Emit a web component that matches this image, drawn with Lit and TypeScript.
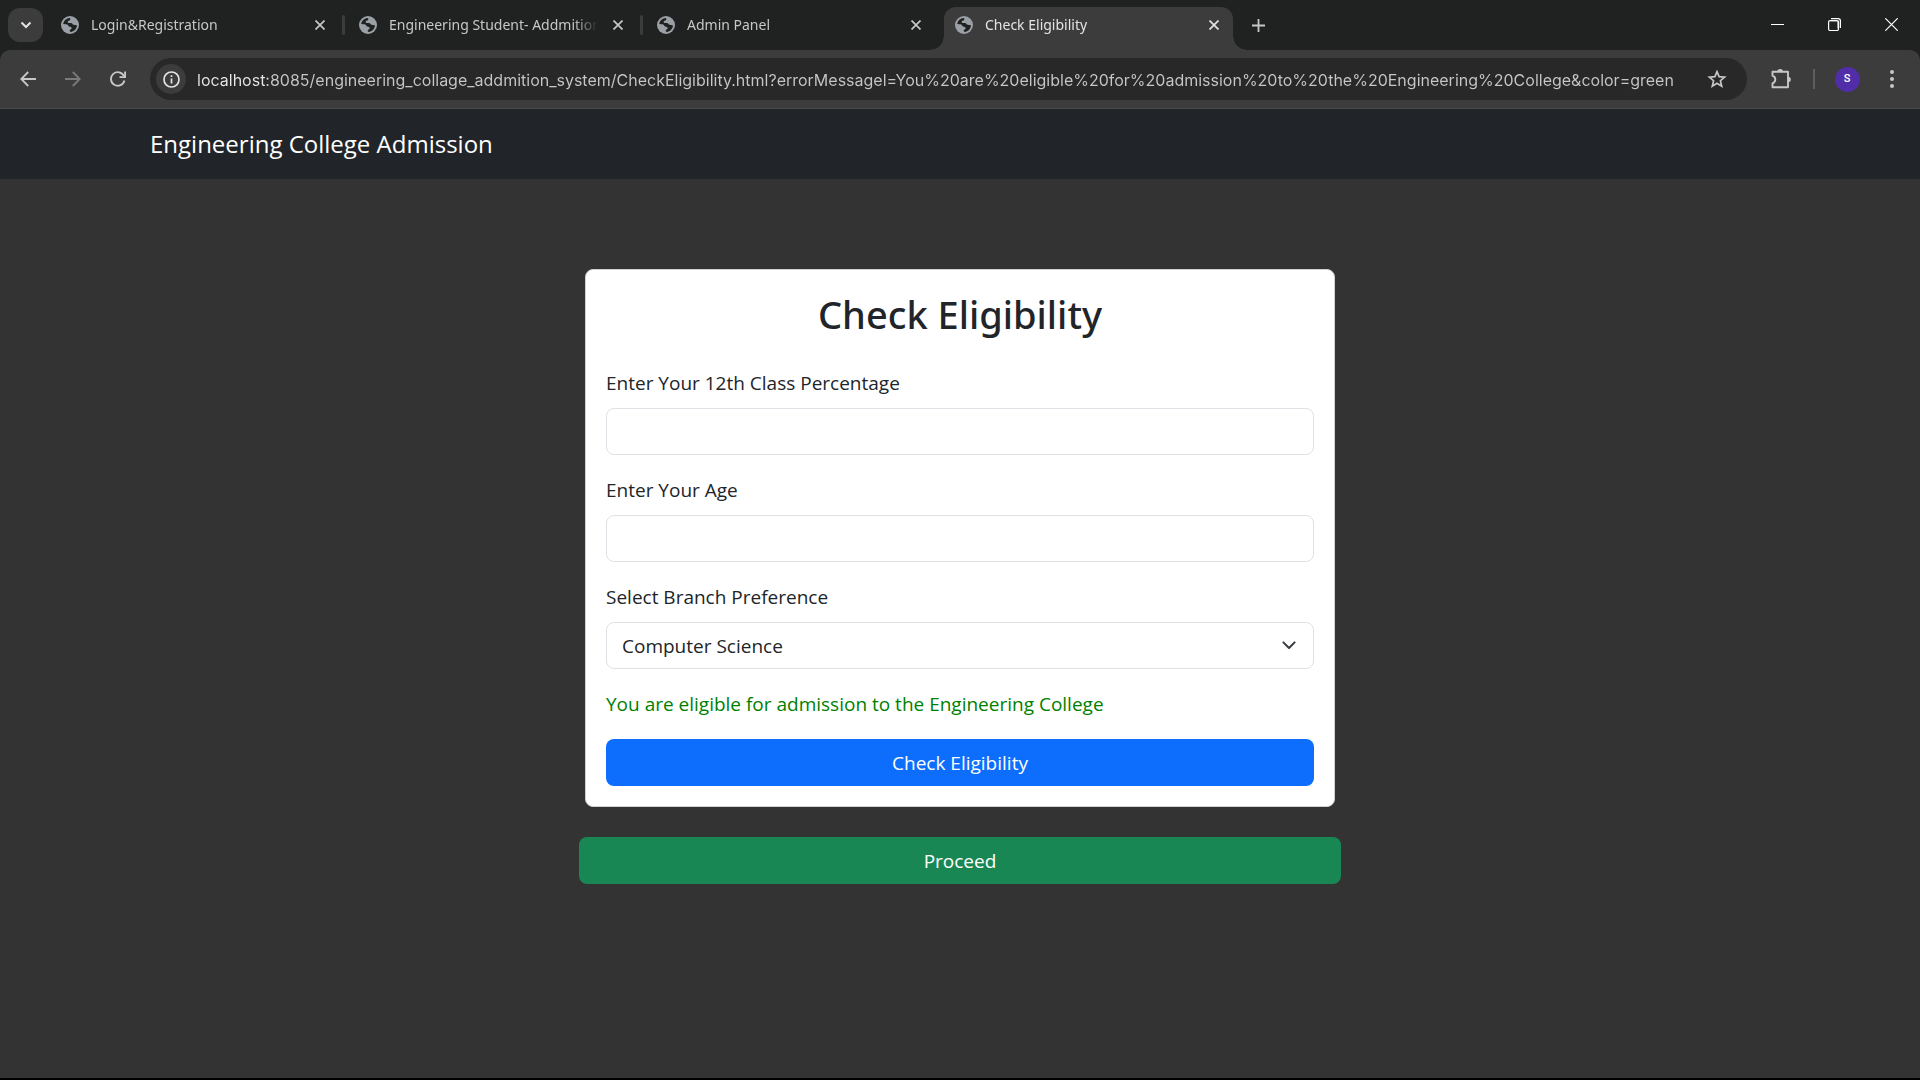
import { LitElement, html, css, svg } from "lit";
import { customElement, property } from "lit/decorators.js";
import { classMap } from "lit/directives/class-map.js";

interface Tab {
  title: string;
  active: boolean;
}

const TABS: Tab[] = [
  { title: "Login&Registration", active: false },
  { title: "Engineering Student- Addmition", active: false },
  { title: "Admin Panel", active: false },
  { title: "Check Eligibility", active: true },
];

const ADDRESS =
  "localhost:8085/engineering_collage_addmition_system/CheckEligibility.html?errorMessagel=You%20are%20eligible%20for%20admission%20to%20the%20Engineering%20College&color=green";

const reset = css`
  *,
  *::before,
  *::after {
    box-sizing: border-box;
  }
  button {
    display: inline-flex;
    align-items: center;
    justify-content: center;
    margin: 0;
    padding: 0;
    border: 0;
    background: none;
    color: inherit;
    font: inherit;
    cursor: pointer;
  }
  svg {
    display: block;
    flex: none;
  }
`;

const globe = svg`
  <circle cx="12" cy="12" r="12" fill="#9aa0a6"></circle>
  <path fill="#202221" d="M3 10.6C3.5 6.3 7.2 2.9 11.6 2.6C12.6 3.3 12.8 4.8 11.8 5.7C10.9 6.5 9.2 6.3 8.9 7.5C8.7 8.6 9.8 9.3 11.2 9.3H13.4C14.7 9.3 15 10.5 15.9 11.2C17 12 19.3 11.4 21.3 12.6C21 16.5 18 20.4 13.6 21.2C12.4 21.3 11.4 20.6 11.6 19.4C11.8 18.3 13.6 18 14.2 16.8C14.8 15.5 13.6 14.3 12 14.2C10.4 14.1 9.8 13.4 9.4 12.3C8.9 11.1 7.6 10.9 6.2 10.9Z"></path>`;

@customElement("browser-tabs")
class BrowserTabs extends LitElement {
  @property({ attribute: false }) tabs: Tab[] = [];

  static styles = [
    reset,
    css`
      :host {
        display: flex;
        height: 50px;
        padding-left: 8px;
        background: #202221;
        color: #c7c7c7;
        font: 14px/20px "Noto Sans", "Open Sans", sans-serif;
      }
      .search {
        flex: none;
        width: 35px;
        height: 34px;
        margin: 8px 7px 0 0;
        border-radius: 12px;
        background: #3c3c3c;
        color: #e3e3e3;
      }
      .tabs {
        display: flex;
        flex: 0 1 auto;
        min-width: 0;
        padding-top: 7px;
      }
      .tab {
        position: relative;
        display: flex;
        align-items: center;
        gap: 12px;
        flex: 0 1 289px;
        width: 289px;
        min-width: 0;
        padding: 0 11px 7px;
      }
      .tab.active {
        border-radius: 12px 12px 0 0;
        background: #3c3c3c;
        color: #e3e3e3;
      }
      .tab.active::before,
      .tab.active::after {
        content: "";
        position: absolute;
        bottom: 0;
        width: 13px;
        height: 13px;
      }
      .tab.active::before {
        right: 100%;
        background: radial-gradient(circle at 0 0, transparent 12px, #3c3c3c 13px);
      }
      .tab.active::after {
        left: 100%;
        background: radial-gradient(circle at 100% 0, transparent 12px, #3c3c3c 13px);
      }
      .title {
        flex: 1;
        min-width: 0;
        overflow: hidden;
        text-align: left;
        white-space: nowrap;
        mask-image: linear-gradient(90deg, #000 calc(100% - 24px), transparent);
      }
      .close {
        flex: none;
        width: 16px;
        height: 16px;
      }
      .divider {
        flex: none;
        width: 3px;
        height: 20px;
        margin: 8px 3px 0;
        border-radius: 2px;
      }
      .divider.shown {
        background: #3c3c3c;
      }
      .add {
        flex: none;
        width: 32px;
        height: 50px;
        margin-left: 9px;
      }
      .window {
        display: flex;
        height: 48px;
        margin-left: auto;
        color: #fff;
      }
      .window button {
        width: 57px;
      }
    `,
  ];

  render() {
    return html`
      <button class="search" aria-label="Search tabs">
        <svg width="12" height="12" viewBox="0 0 12 12" fill="none" stroke="currentColor" stroke-width="2">
          <path d="M1.5 3.5L6 8l4.500-4.500"></path>
        </svg>
      </button>
      <div class="tabs">
        ${this.tabs.map(
          (tab, i) => html`
            <div class=${classMap({ tab: true, active: tab.active })}>
              <svg width="18" height="18" viewBox="0 0 24 24">${globe}</svg>
              <span class="title">${tab.title}</span>
              <button class="close" aria-label="Close tab">
                <svg width="10" height="10" viewBox="0 0 10 10" stroke="currentColor" stroke-width="1.7">
                  <path d="M.5.5l9 9M9.500.5l-9 9"></path>
                </svg>
              </button>
            </div>
            ${i < this.tabs.length - 1
              ? html`<span
                  class=${classMap({ divider: true, shown: !this.tabs[i + 1].active })}
                ></span>`
              : ""}
          `
        )}
      </div>
      <button class="add" aria-label="New tab">
        <svg width="13" height="13" viewBox="0 0 13 13" stroke="currentColor" stroke-width="1.8">
          <path d="M6.500 0v13M0 6.500h13"></path>
        </svg>
      </button>
      <div class="window">
        <button aria-label="Minimize">
          <svg width="13" height="13" viewBox="0 0 13 13" stroke="currentColor">
            <path d="M0 6.500h13"></path>
          </svg>
        </button>
        <button aria-label="Restore">
          <svg width="13" height="13" viewBox="0 0 13 13" fill="none" stroke="currentColor">
            <path d="M9.500 3v7.500" stroke="#8a8a8a"></path>
            <path d="M2.500 3h7" stroke="#8a8a8a"></path>
            <rect x=".6" y="2.600" width="9.900" height="9.900" rx="1.500" stroke-width="1.200"></rect>
            <path d="M3 .6h7.200a2.200 2.200 0 0 1 2.200 2.200V10" stroke-width="1.200"></path>
          </svg>
        </button>
        <button aria-label="Close">
          <svg width="13" height="13" viewBox="0 0 13 13" stroke="currentColor" stroke-width="1.200">
            <path d="M.3.3l12.400 12.400M12.700.3L.3 12.700"></path>
          </svg>
        </button>
      </div>
    `;
  }
}

@customElement("browser-toolbar")
class BrowserToolbar extends LitElement {
  @property() address = "";

  static styles = [
    reset,
    css`
      :host {
        display: block;
        background: #202221;
      }
      .bar {
        display: flex;
        align-items: center;
        height: 59px;
        padding: 0 8px 0 5px;
        border-bottom: 1px solid #4a4a4a;
        border-radius: 10px 10px 0 0;
        background: #3c3c3c;
        color: #c7c7c7;
      }
      .nav {
        width: 45px;
        height: 40px;
      }
      .nav:disabled {
        color: #7a7a7a;
      }
      .omnibox {
        display: flex;
        align-items: center;
        flex: 1;
        min-width: 0;
        height: 42px;
        margin: 0 14px 0 10px;
        padding: 0 15px 0 6px;
        border-radius: 21px;
        background: #282828;
      }
      .info {
        flex: none;
        width: 30px;
        height: 30px;
        margin-right: 11px;
        border-radius: 50%;
        background: #3c3c3c;
        color: #e3e3e3;
      }
      .address {
        flex: 1;
        min-width: 0;
        height: 30px;
        margin: 0;
        padding: 2px 0 0;
        border: 0;
        outline: 0;
        background: linear-gradient(90deg, #e8e8e8 69px, #c7c7c7 69px);
        background-clip: text;
        -webkit-background-clip: text;
        -webkit-text-fill-color: transparent;
        color: #c7c7c7;
        font: 16px/24px Inter, "Open Sans", sans-serif;
      }
      .star {
        flex: none;
        width: 30px;
        height: 30px;
      }
      .tool {
        width: 40px;
        height: 40px;
      }
      .divider {
        width: 2px;
        height: 20px;
        margin: 0 12px;
        background: #5e5e5e;
      }
      .avatar {
        display: flex;
        align-items: center;
        justify-content: center;
        width: 25px;
        height: 25px;
        border-radius: 50%;
        background: #512da8;
        color: #fff;
        font: 500 11px/16px Roboto, sans-serif;
      }
      .menu {
        margin-left: 5px;
      }
    `,
  ];

  render() {
    return html`
      <div class="bar">
        <button class="nav" aria-label="Back">
          <svg width="16" height="16" viewBox="0 0 16 16" fill="none" stroke="currentColor" stroke-width="1.800">
            <path d="M16 8H1.500M8.200 1L1.300 8l6.900 7"></path>
          </svg>
        </button>
        <button class="nav" aria-label="Forward" disabled>
          <svg width="16" height="16" viewBox="0 0 16 16" fill="none" stroke="currentColor" stroke-width="1.800">
            <path d="M0 8h14.500M7.800 1l6.900 7-6.900 7"></path>
          </svg>
        </button>
        <button class="nav" aria-label="Reload">
          <svg width="16" height="16" viewBox="0 0 16 16" fill="none" stroke="currentColor" stroke-width="1.900">
            <path d="M14.400 9.500A6.800 6.800 0 1 1 14 5.200"></path>
            <path d="M15.100.5v5.600H9.500"></path>
          </svg>
        </button>
        <div class="omnibox">
          <button class="info" aria-label="View site information">
            <svg width="17" height="17" viewBox="0 0 17 17" fill="none" stroke="currentColor" stroke-width="1.700">
              <circle cx="8.500" cy="8.500" r="7.500"></circle>
              <path d="M8.500 7.500v5M8.500 4.300v1.800"></path>
            </svg>
          </button>
          <input class="address" type="text" aria-label="Address" spellcheck="false" .value=${this.address} />
          <button class="star" aria-label="Bookmark this page">
            <svg width="20" height="20" viewBox="0 0 20 20" fill="none" stroke="currentColor" stroke-width="1.700">
              <path
                d="M10 2.600l2.100 5 5.500.5-4.200 3.600 1.300 5.400-4.700-2.900-4.700 2.900 1.300-5.400L2.400 8.100l5.500-.5z"
              ></path>
            </svg>
          </button>
        </div>
        <button class="tool" aria-label="Extensions">
          <svg width="22" height="22" viewBox="0 0 22 22">
            <path
              fill="none"
              stroke="currentColor"
              stroke-width="1.900"
              stroke-linejoin="round"
              d="M2.500 3.700H18V19.300H2.500V15.300C4.300 14.600 5.300 13.200 5.300 11.500S4.300 8.400 2.500 7.700Z"
            ></path>
            <path fill="currentColor" d="M7.400 3.700a2.800 2.800 0 0 1 5.600 0zM18 8.700a2.800 2.800 0 0 1 0 5.600z"></path>
          </svg>
        </button>
        <span class="divider"></span>
        <button class="tool" aria-label="Profile"><span class="avatar">S</span></button>
        <button class="tool menu" aria-label="Menu">
          <svg width="4" height="18" viewBox="0 0 4 18" fill="currentColor">
            <circle cx="2" cy="2" r="2"></circle>
            <circle cx="2" cy="9" r="2"></circle>
            <circle cx="2" cy="16" r="2"></circle>
          </svg>
        </button>
      </div>
    `;
  }
}

@customElement("eligibility-page")
class EligibilityPage extends LitElement {
  static styles = [
    reset,
    css`
      :host {
        display: flex;
        flex-direction: column;
        background: #333;
        color: #212529;
        font: 19px/30px "Open Sans", "Noto Sans", sans-serif;
      }
      .navbar {
        display: flex;
        align-items: center;
        height: 70px;
        padding: 0 150px;
        background: #212529;
      }
      .brand {
        color: #fff;
        font-size: 24px;
        line-height: 36px;
        text-decoration: none;
      }
      .content {
        display: flex;
        flex-direction: column;
        gap: 30px;
        width: 100%;
        max-width: 762px;
        margin: 0 auto;
        padding: 90px 0;
      }
      .card {
        display: flex;
        flex-direction: column;
        gap: 20px;
        margin: 0 6px;
        padding: 20px;
        border: 1px solid #d2d2d2;
        border-radius: 8px;
        background: #fff;
      }
      .heading {
        margin: 0 0 10px;
        font: 500 38px/48px "Noto Sans", "Open Sans", sans-serif;
        text-align: center;
      }
      .field {
        display: flex;
        flex-direction: column;
        gap: 10px;
      }
      .control {
        width: 100%;
        height: 47px;
        margin: 0;
        padding: 0 15px;
        border: 1px solid #dee2e6;
        border-radius: 8px;
        background: #fff;
        color: #212529;
        font: inherit;
        appearance: none;
      }
      .select {
        display: grid;
        align-items: center;
      }
      .select > * {
        grid-area: 1 / 1;
      }
      .caret {
        justify-self: end;
        margin-right: 15px;
        pointer-events: none;
      }
      .message {
        margin: 0;
        color: #008000;
      }
      .button {
        width: 100%;
        height: 47px;
        border-radius: 8px;
        color: #fff;
      }
      .primary {
        background: #0d6efd;
      }
      .success {
        background: #198754;
      }
    `,
  ];

  render() {
    return html`
      <nav class="navbar"><a class="brand" href="#">Engineering College Admission</a></nav>
      <main class="content">
        <form class="card" @submit=${(e: Event) => e.preventDefault()}>
          <h2 class="heading">Check Eligibility</h2>
          <div class="field">
            <label for="percentage">Enter Your 12th Class Percentage</label>
            <input class="control" id="percentage" type="text" inputmode="decimal" />
          </div>
          <div class="field">
            <label for="age">Enter Your Age</label>
            <input class="control" id="age" type="text" inputmode="numeric" />
          </div>
          <div class="field">
            <label for="branch">Select Branch Preference</label>
            <div class="select">
              <select class="control" id="branch">
                <option>Computer Science</option>
              </select>
              <svg
                class="caret"
                width="20"
                height="15"
                viewBox="0 0 16 12"
                fill="none"
                stroke="#343a40"
                stroke-width="1.600"
                stroke-linecap="round"
                stroke-linejoin="round"
              >
                <path d="M3.500 3.500L8 8l4.500-4.500"></path>
              </svg>
            </div>
          </div>
          <p class="message">You are eligible for admission to the Engineering College</p>
          <button class="button primary" type="submit">Check Eligibility</button>
        </form>
        <button class="button success" type="button">Proceed</button>
      </main>
    `;
  }
}

@customElement("app-root")
class AppRoot extends LitElement {
  static styles = css`
    :host {
      display: flex;
      flex-direction: column;
      box-sizing: border-box;
      min-height: 100vh;
      border-bottom: 2px solid #000;
    }
    .page {
      flex: 1;
    }
  `;

  render() {
    return html`
      <browser-tabs .tabs=${TABS}></browser-tabs>
      <browser-toolbar .address=${ADDRESS}></browser-toolbar>
      <eligibility-page class="page"></eligibility-page>
    `;
  }
}
